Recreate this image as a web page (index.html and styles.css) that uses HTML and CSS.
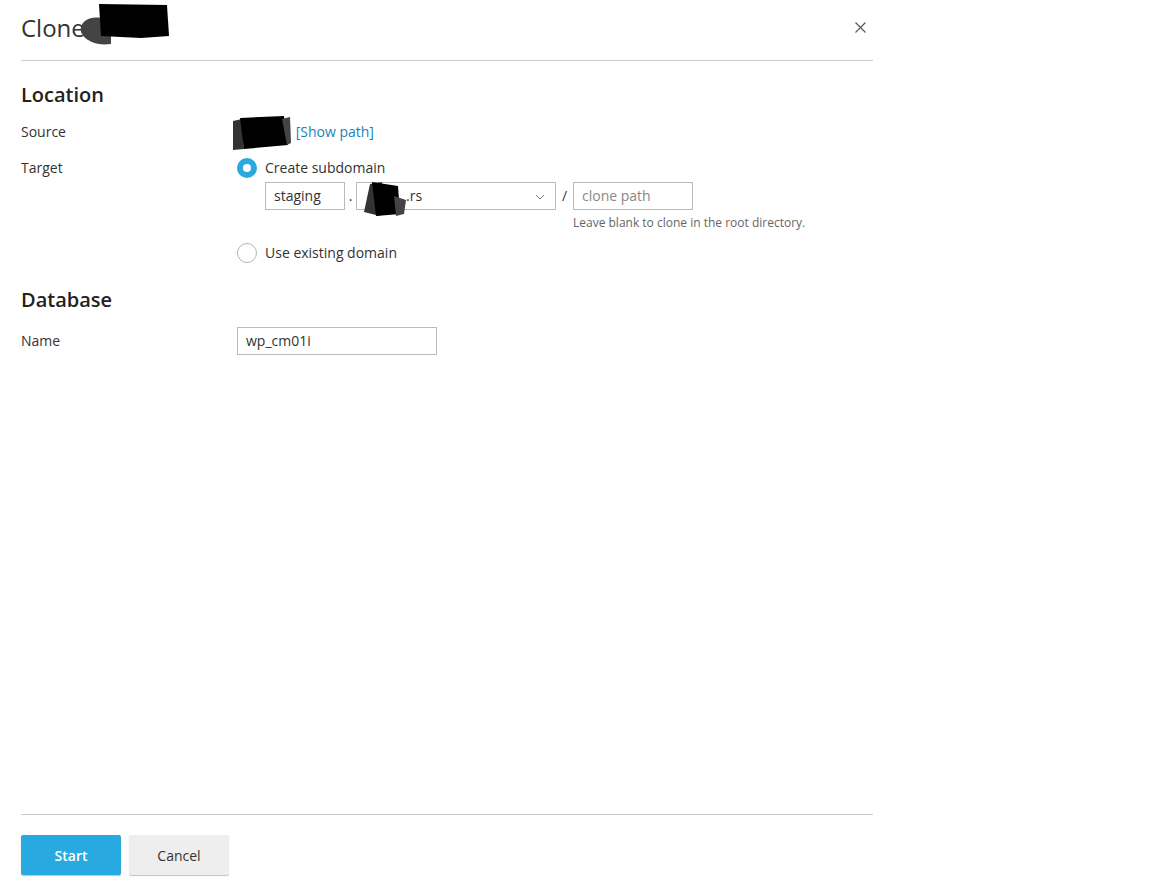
FILE: index.html
```html
<!DOCTYPE html>
<html lang="en">
<head>
    <meta charset="UTF-8">
    <title>Clone</title>
    <link rel="stylesheet" href="styles.css">
</head>
<body>
    <div class="dialog">
        <div class="dialog-header">
            <h1 class="dialog-title">Clone <span class="redacted title-redact"><svg width="96" height="44" viewBox="0 0 96 44"><path d="M2 30 C0 20 10 14 22 16 L32 18 L32 42 C20 44 6 40 2 30 Z" fill="#444"/><path d="M20 2 L88 3 L90 34 L62 36 L22 34 Z" fill="#000"/></svg></span></h1>
            <span class="close"><svg width="11" height="11" viewBox="0 0 11 11"><path d="M0.5 0.5 L10.5 10.5 M10.5 0.5 L0.5 10.5" stroke="#555" stroke-width="1.1" fill="none"/></svg></span>
        </div>

        <div class="dialog-body">
            <h2 class="section-title">Location</h2>

            <div class="form-row">
                <div class="label">Source</div>
                <div class="value">
                    <span class="redacted source-redact"><svg width="60" height="36" viewBox="0 0 60 36"><path d="M1 6 L10 4 L12 34 L1 35 Z" fill="#333"/><path d="M8 3 L52 1 L56 30 L12 34 Z" fill="#000"/><path d="M50 4 L58 2 L59 28 L55 30 Z" fill="#444"/></svg></span>
                    <a class="link" href="#">[Show path]</a>
                </div>
            </div>

            <div class="form-row target-row">
                <div class="label">Target</div>
                <div class="value">
                    <label class="radio-line">
                        <span class="radio checked"></span>
                        Create subdomain
                    </label>
                    <div class="subdomain-fields">
                        <div class="input short">staging</div>
                        <span class="sep">.</span>
                        <div class="input select">
                            <span class="redacted domain-redact"><svg width="46" height="38" viewBox="0 0 46 38"><path d="M2 32 L8 4 L20 2 L18 36 Z" fill="#333"/><path d="M10 2 L36 6 L38 34 L14 36 Z" fill="#000"/><path d="M32 16 L44 20 L42 34 L34 36 Z" fill="#444"/></svg></span>.rs
                            <svg class="caret" width="10" height="6" viewBox="0 0 10 6"><path d="M1 1 L5 5 L9 1" fill="none" stroke="#777" stroke-width="1"/></svg>
                        </div>
                        <span class="sep slash">/</span>
                        <div class="path-field">
                            <div class="input path placeholder">clone path</div>
                            <div class="hint">Leave blank to clone in the root directory.</div>
                        </div>
                    </div>
                    <label class="radio-line existing">
                        <span class="radio"></span>
                        Use existing domain
                    </label>
                </div>
            </div>

            <h2 class="section-title db-title">Database</h2>

            <div class="form-row name-row">
                <div class="label">Name</div>
                <div class="value">
                    <div class="input name">wp_cm01i</div>
                </div>
            </div>
        </div>

        <div class="dialog-footer">
            <button class="btn btn-primary">Start</button>
            <button class="btn">Cancel</button>
        </div>
    </div>
</body>
</html>
```

FILE: styles.css
```css
body {
    margin: 0;
    font-family: 'Open Sans', 'Noto Sans', sans-serif;
    font-size: 14px;
    color: #333333;
    background-color: #ffffff;
}

.dialog {
    width: 852px;
    margin-left: 21px;
    height: 889px;
    display: flex;
    flex-direction: column;
}

.dialog-header {
    height: 61px;
    flex-shrink: 0;
    display: flex;
    align-items: center;
    justify-content: space-between;
    border-bottom: 1px solid #cccccc;
    box-sizing: border-box;
}

.dialog-title {
    margin: 0 0 4px 0;
    font-size: 24px;
    font-weight: 400;
    color: #333333;
    line-height: 32px;
}

.redacted {
    position: relative;
    display: inline-block;
}

.redacted svg {
    position: absolute;
}

.title-redact {
    width: 60px;
    height: 24px;
    margin-left: -12px;
}

.title-redact svg {
    left: 0;
    top: -11px;
}

.close {
    display: flex;
    margin-right: 7px;
    margin-bottom: 6px;
}

.dialog-body {
    flex: 1;
}

.section-title {
    margin: 22px 0 15px 0;
    font-size: 20px;
    font-weight: 600;
    line-height: 24px;
    color: #222222;
}

.db-title {
    margin-top: 25px;
    margin-bottom: 15px;
}

.form-row {
    display: grid;
    grid-template-columns: 216px 1fr;
    line-height: 20px;
}

.target-row {
    margin-top: 16px;
}

.name-row .label {
    padding-top: 4px;
}

.source-redact {
    width: 55px;
    height: 20px;
    vertical-align: top;
}

.source-redact svg {
    left: -5px;
    top: -7px;
}

.link {
    color: #1a83b5;
    text-decoration: none;
}

.radio-line {
    display: flex;
    align-items: center;
    gap: 8px;
    height: 20px;
}

.radio-line.existing {
    margin-top: 12px;
}

.radio {
    width: 20px;
    height: 20px;
    box-sizing: border-box;
    border: 1px solid #b5b5b5;
    border-radius: 50%;
    background: #ffffff;
}

.radio.checked {
    border: 6px solid #28aae1;
}

.subdomain-fields {
    display: flex;
    align-items: flex-start;
    margin: 4px 0 0 28px;
}

.input {
    height: 28px;
    box-sizing: border-box;
    border: 1px solid #bbbbbb;
    padding: 0 8px;
    line-height: 26px;
    color: #333333;
    background: #ffffff;
}

.input.short {
    width: 80px;
}

.input.select {
    width: 200px;
    position: relative;
    padding-left: 8px;
}

.domain-redact {
    width: 41px;
    height: 20px;
    vertical-align: top;
}

.domain-redact svg {
    left: -3px;
    top: -3px;
}

.caret {
    position: absolute;
    right: 10px;
    top: 11px;
}

.sep {
    width: 11px;
    text-align: center;
    line-height: 28px;
}

.sep.slash {
    width: 17px;
}

.input.path {
    width: 120px;
}

.placeholder {
    color: #888888;
}

.hint {
    font-size: 12px;
    line-height: 16px;
    color: #666666;
    margin-top: 5px;
}

.input.name {
    width: 200px;
}

.dialog-footer {
    border-top: 1px solid #cccccc;
    padding: 20px 0 14px 0;
    display: flex;
    gap: 8px;
}

.btn {
    width: 100px;
    height: 40px;
    border: none;
    border-radius: 2px;
    background: #eeeeee;
    box-shadow: 0 1px 1px rgba(0, 0, 0, 0.25);
    font-family: 'Open Sans', 'Noto Sans', sans-serif;
    font-size: 14px;
    color: #333333;
}

.btn-primary {
    background: #28aae1;
    color: #ffffff;
    font-weight: 600;
}
```
